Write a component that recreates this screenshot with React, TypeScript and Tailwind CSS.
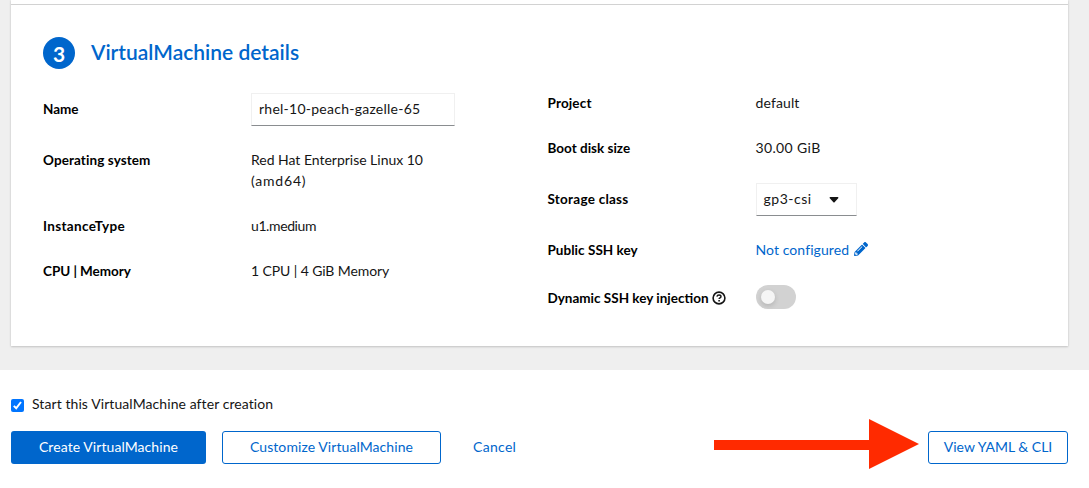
import type { ReactNode } from "react";
import { FaPencilAlt } from "react-icons/fa";

function Row({ label, spacing = "", children }: { label: ReactNode; spacing?: string; children: ReactNode }) {
  return (
    <div className="flex items-center">
      <dt className={`flex w-52 shrink-0 items-center self-stretch text-[13.5px] font-bold text-black ${spacing}`}>{label}</dt>
      <dd className="min-w-0">{children}</dd>
    </div>
  );
}

function Value({ spacing = "", children }: { spacing?: string; children: ReactNode }) {
  return <div className={`-mt-px mb-px ${spacing}`}>{children}</div>;
}

function HelpIcon() {
  return (
    <svg viewBox="0 0 14 14" className="-mr-1 ml-[3px] size-[14px]" fill="none" stroke="#151515" strokeWidth="1.6">
      <circle cx="7" cy="7" r="5.9" />
      <path d="M4.900 5.700c.2-1.100 1-1.650 2.100-1.650 1.200 0 2 .65 2 1.600 0 1.250-1.900 1.200-1.900 2.350" strokeWidth="1.400" />
      <path d="M6.300 8.900h1.600v1.500h-1.600z" fill="#151515" stroke="none" />
    </svg>
  );
}

export default function App() {
  return (
    <div className="flex h-[488px] flex-col overflow-hidden bg-white font-['Lato',sans-serif] text-sm leading-[21px] text-[#151515]">
      <main className="h-[370px] bg-[#efefef] pr-[21px] pl-[11px]">
        <section className="h-[346px] bg-white shadow-[0_1px_2px_rgba(3,3,3,0.16),0_0_2px_rgba(3,3,3,0.08)]">
          <div className="h-[5px] border-b border-[#d2d2d2]" />
          <div className="px-8 pt-8">
            <h2 className="flex h-8 items-center text-[21px] font-semibold text-[#0066cc]">
              <span className="mr-4 flex size-8 items-center justify-center rounded-full bg-[#0066cc] text-[21px] font-bold text-white">3</span>
              <span className="-mt-1">VirtualMachine details</span>
            </h2>
            <div className="mt-6 flex">
              <dl className="flex w-[504.500px] flex-col gap-6">
                <Row label="Name" spacing="tracking-[-0.05px]">
                  <div className="flex h-[33px] w-[204px] items-center border border-[#f0f0f0] border-b-[#8a8d90] px-[7px] pb-0.5 tracking-[0.25px]">
                    rhel-10-peach-gazelle-65
                  </div>
                </Row>
                <Row label={<span className="self-start">Operating system</span>} spacing="tracking-[0.09px]">
                  <Value spacing="tracking-[-0.02px]">
                    Red Hat Enterprise Linux 10<br />
                    <span className="tracking-[0.8px]">(amd64)</span>
                  </Value>
                </Row>
                <Row label="InstanceType" spacing="tracking-[0.34px]">
                  <Value spacing="tracking-[-0.4px]">u1.medium</Value>
                </Row>
                <Row label="CPU | Memory" spacing="tracking-[-0.05px]">
                  <Value spacing="tracking-[-0.1px]">1 CPU | 4 GiB Memory</Value>
                </Row>
              </dl>
              <dl className="flex flex-col gap-6">
                <Row label="Project" spacing="tracking-[0.15px]">
                  <Value spacing="tracking-[0.13px]">default</Value>
                </Row>
                <Row label="Boot disk size">
                  <Value spacing="tracking-[0.36px]">30.00 GiB</Value>
                </Row>
                <Row label="Storage class" spacing="tracking-[0.25px]">
                  <div className="flex h-[33px] w-[101px] items-center justify-between border border-[#f0f0f0] border-b-[#8a8d90] pr-[17px] pl-[7px]">
                    <span className="pb-0.5 tracking-[0.5px]">gp3-csi</span>
                    <svg viewBox="0 0 10 6" className="h-[6px] w-[10px]" fill="#151515">
                      <path d="M1.300 0h7.400c.7 0 1 .8.5 1.300L5.600 5.200c-.3.300-.9.300-1.200 0L.8 1.300C.3.8.6 0 1.300 0Z" />
                    </svg>
                  </div>
                </Row>
                <Row label="Public SSH key" spacing="tracking-[0.04px]">
                  <Value>
                    <a className="flex items-center text-[#0066cc]">
                      <span className="tracking-[0.08px]">Not configured</span>
                      <FaPencilAlt className="-mt-0.5 ml-[5px] size-3.5" />
                    </a>
                  </Value>
                </Row>
                <Row label={<span className="mt-0.5 flex items-center">Dynamic SSH key injection<HelpIcon /></span>}>
                  <div className="flex h-6 w-10 items-center rounded-full bg-[#d2d2d2] pl-[5px]">
                    <span className="size-[14px] rounded-full bg-[#f5f5f5] shadow-[0_2px_5px_rgba(3,3,3,0.15)]" />
                  </div>
                </Row>
              </dl>
            </div>
          </div>
        </section>
      </main>
      <footer className="flex flex-col pt-6 pr-[21px] pl-[11px]">
        <label className="flex h-[21px] items-center">
          <span className="mt-0.5 flex size-[13px] items-center justify-center rounded-[2px] bg-[#0075ff]">
            <svg viewBox="0 0 13 13" className="size-[13px]" fill="none" stroke="white" strokeWidth="2">
              <path d="M2.800 6.900 5.200 9.300 10 3" />
            </svg>
          </span>
          <span className="-mt-px mb-px ml-2 tracking-[0.08px]">Start this VirtualMachine after creation</span>
        </label>
        <div className="mt-4 flex h-[33px] items-center">
          <button className="h-[33px] w-[195px] rounded-[3px] bg-[#0066cc] pb-0.5 tracking-[0.07px] text-white">Create VirtualMachine</button>
          <button className="ml-4 h-[33px] w-[219px] rounded-[3px] border border-[#0066cc] pb-0.5 tracking-[0.07px] text-[#0066cc]">Customize VirtualMachine</button>
          <button className="ml-8 pb-0.5 tracking-[0.3px] text-[#0066cc]">Cancel</button>
          <svg viewBox="0 0 205 50" className="-mt-3 mr-[9px] ml-auto h-[50px] w-[205px] shrink-0 self-start" fill="#ff2a00">
            <path d="M0 21h155V0l50 25-50 25V31H0Z" />
          </svg>
          <button className="h-[33px] w-[140px] rounded-[3px] border border-[#0066cc] pb-0.5 text-[#0066cc]">View YAML &amp; CLI</button>
        </div>
      </footer>
    </div>
  );
}
